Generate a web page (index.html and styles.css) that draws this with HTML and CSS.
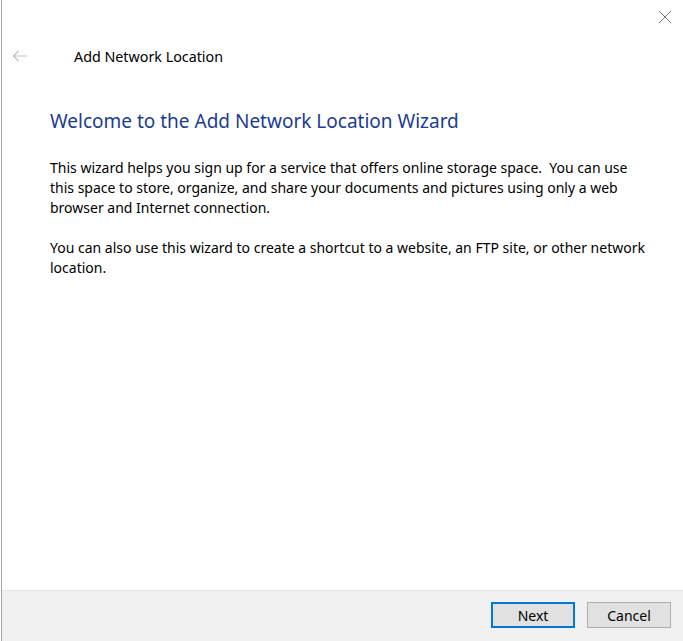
FILE: index.html
```html
<!DOCTYPE html>
<html lang="en">
<head>
    <meta charset="UTF-8">
    <title>Add Network Location</title>
    <link rel="stylesheet" href="styles.css">
</head>
<body>
    <div class="window">
        <div class="titlebar">
            <div class="closeBtn">
                <svg width="14" height="14" viewBox="0 0 14 14">
                    <path d="M1 1 L13 13 M13 1 L1 13" stroke="#777" stroke-width="1" fill="none"/>
                </svg>
            </div>
        </div>
        <div class="nav">
            <div class="backBtn">
                <svg width="16" height="12" viewBox="0 0 16 12">
                    <path d="M15 6 H1.5 M6.5 1 L1.5 6 L6.5 11" stroke="#bdbdbd" stroke-width="1.2" fill="none"/>
                </svg>
            </div>
            <span class="navTitle">Add Network Location</span>
        </div>
        <div class="content">
            <h1>Welcome to the Add Network Location Wizard</h1>
            <p>This wizard helps you sign up for a service that offers online storage space.&nbsp; You can use<br>
               this space to store, organize, and share your documents and pictures using only a web<br>
               browser and Internet connection.</p>
            <p>You can also use this wizard to create a shortcut to a website, an FTP site, or other network<br>
               location.</p>
        </div>
        <div class="footer">
            <button class="default">Next</button>
            <button>Cancel</button>
        </div>
    </div>
</body>
</html>
```
FILE: styles.css
```css
* {
    margin: 0;
    padding: 0;
    box-sizing: border-box;
}

html, body {
    height: 100%;
    background-color: #fff;
}

body {
    font-family: "Noto Sans", "Open Sans", sans-serif;
    color: #000;
    padding-left: 1px;
}

.window {
    height: 100%;
    border-left: 1px solid #a8a8a8;
    display: flex;
    flex-direction: column;
}

.titlebar {
    height: 34px;
    display: flex;
    justify-content: flex-end;
}

.closeBtn {
    width: 37px;
    height: 34px;
    display: flex;
    align-items: center;
    justify-content: center;
}

.nav {
    height: 44px;
    display: flex;
    align-items: center;
}

.backBtn {
    width: 72px;
    padding-left: 10px;
    display: flex;
    align-items: center;
}

.navTitle {
    font-size: 14.3px;
    color: #000;
}

/* main text area */
.content {
    flex: 1;
    padding: 29px 0 0 48px;
}

h1 {
    font-weight: normal;
    font-size: 19px;
    line-height: 28px;
    color: #1b3c91;
    margin-bottom: 23px;
}

.content p {
    font-size: 14px;
    line-height: 20px;
    margin-bottom: 20px;
    white-space: nowrap;
}

.footer {
    height: 51px;
    background-color: #f0f0f0;
    border-top: 1px solid #e3e3e3;
    display: flex;
    justify-content: flex-end;
    align-items: flex-start;
    padding: 11px 12px 0 0;
    gap: 12px;
}

button {
    width: 84px;
    height: 26px;
    font-family: inherit;
    font-size: 14px;
    color: #000;
    background-color: #e1e1e1;
    border: 1px solid #adadad;
}

button.default {
    border: 2px solid #0078d7;
}
```
